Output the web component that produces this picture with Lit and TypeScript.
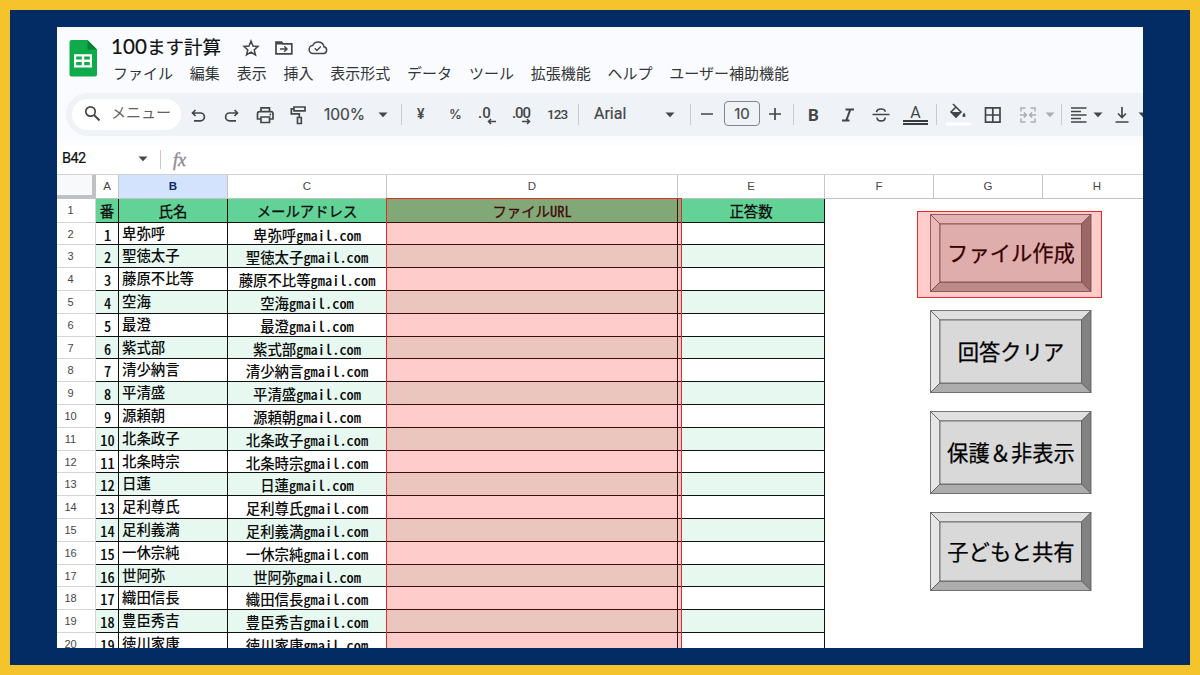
import { LitElement, html, css, svg } from "lit";
import { customElement } from "lit/decorators.js";

const names = ["卑弥呼", "聖徳太子", "藤原不比等", "空海", "最澄", "紫式部", "清少納言", "平清盛", "源頼朝", "北条政子", "北条時宗", "日蓮", "足利尊氏", "足利義満", "一休宗純", "世阿弥", "織田信長", "豊臣秀吉", "徳川家康"];
const menus = ["ファイル", "編集", "表示", "挿入", "表示形式", "データ", "ツール", "拡張機能", "ヘルプ", "ユーザー補助機能"];

const icon = (w: number, h: number, body: unknown, cls = "") =>
  html`<svg class="ic ${cls}" width=${w} height=${h} viewBox="0 0 ${w} ${h}">${body}</svg>`;
const caret = (cls = "") => icon(10, 6, svg`<path class="solid" d="M.5 .5h9L5 5.2z"/>`, cls);
const sep = html`<i class="sep"></i>`;

@customElement("bevel-button")
export class BevelButton extends LitElement {
  static properties = { h: { type: Number } };
  declare h: number;
  static styles = css`
    :host { display: grid; width: 162px; }
    svg, span { grid-area: 1 / 1; }
    svg { display: block; overflow: visible; }
    svg path { stroke: #555; stroke-width: 0.8; stroke-linejoin: round; }
    .face { fill: #d9d9d9; }
    .top { fill: #e0e0e0; }
    .left { fill: #e6e6e6; }
    .right { fill: #828282; }
    .bottom { fill: #adadad; }
    span { align-self: center; text-align: center; font: 400 21.3px/30px "Noto Sans CJK JP", sans-serif; color: #000; white-space: nowrap; -webkit-text-stroke: 0.25px #000; padding-bottom: 2px; }
  `;
  render() {
    const b = this.h - 0.5;
    return html`<svg width="162" height=${this.h}>
        <path class="top" d="M.5 .5H161L151.5 10H10z"/>
        <path class="left" d="M.5 .5L10 10V${b - 9.5}L.5 ${b}z"/>
        <path class="right" d="M161 .5V${b}L151.5 ${b - 9.5}V10z"/>
        <path class="bottom" d="M.5 ${b}L10 ${b - 9.5}H151.5L161 ${b}z"/>
        <path class="face" d="M10 10H151.5V${b - 9.5}H10z"/>
      </svg><span><slot></slot></span>`;
  }
}

@customElement("app-root")
export class AppRoot extends LitElement {
  static styles = css`
    :host { display: block; width: 1200px; height: 675px; box-sizing: border-box; border: 10px solid #f5c32c; background: #022c63; padding: 17px 47px; overflow: hidden; }
    * { box-sizing: border-box; }
    .win { width: 1086px; height: 621px; background: #fff; overflow: hidden; position: relative; font-family: "Noto Sans CJK JP", sans-serif; color: #444746; }
    .top { height: 118px; background: linear-gradient(#fafbfe 108px, #fdfdff 118px); }
    .head { height: 66px; display: flex; padding-left: 12px; }
    .logo { margin: 13px 15px 0 0; flex: none; }
    .titles { padding-top: 5px; }
    .title { display: flex; align-items: center; height: 28px; color: #111; font-size: 18.5px; white-space: nowrap; -webkit-text-stroke: 0.2px #111; }
    .title b { font: 400 20.5px/28px "Lato", sans-serif; width: 36px; letter-spacing: 0.1px; }
    .name { width: 130px; display: flex; align-items: center; margin-left: -1px; }
    .marks { display: flex; gap: 14px; align-items: center; padding: 3px 0 0 1px; }
    .menu { display: flex; gap: 16.8px; padding: 1px 0 0 1px; font-size: 15px; line-height: 24px; color: #333637; white-space: nowrap; }
    .bar { height: 43px; margin-left: 9px; padding-left: 6px; background: #eff3f8; border-radius: 22px 0 0 22px; display: grid; align-items: center; overflow: hidden; white-space: nowrap;
      grid-template-columns: 114px 34px 33px 33px 38px 54px 23px 15px 32px 30px 34px 35px 31px 16px 71px 25px 11px 23px 45px 24px 14px 35px 30px 31px 33px 10px 38px 35px 26px 16px 9px 23px 21px 24px 10px; }
    .ic { display: block; fill: none; stroke: #444746; stroke-width: 1.7; overflow: visible; }
    .solid { fill: #444746; stroke: none; }
    .dim { opacity: 0.4; }
    .sep { width: 1px; height: 21px; background: #c9cccf; }
    .search { width: 109px; height: 31px; border-radius: 16px; background: #fff; display: flex; align-items: center; padding-left: 12px; gap: 10px; color: #5f6364; }
    .search span { font-size: 15px; line-height: 22px; padding-bottom: 5px; }
    .t { font: 500 15px/20px "Roboto", sans-serif; color: #444746; }
    .yen { font-size: 14px; padding: 0 0 1px 1px; }
    .zoomv { font: 400 15.6px/20px "Inter", sans-serif; letter-spacing: -0.1px; -webkit-text-stroke: 0.2px #444746; }
    .pct { font-size: 15.5px; font-weight: 400; padding: 0 0 1px 1px; -webkit-text-stroke: 0.2px #444746; font-family: "Inter", sans-serif; font-size: 13px; }
    .small { font-size: 13.5px; letter-spacing: -0.9px; padding-bottom: 1px; }
    .font { font: 400 16px/20px "Roboto", sans-serif; padding-bottom: 2px; -webkit-text-stroke: 0.2px #444746; }
    .size { width: 36px; height: 25px; border: 1px solid #80868b; border-radius: 4px; text-align: center; font: 400 15px/23px "Inter", sans-serif; margin-top: -2px; -webkit-text-stroke: 0.2px #444746; }
    .bold { font: 700 17px/20px "Roboto", sans-serif; padding-left: 1px; }
    .fx { height: 29px; display: flex; align-items: center; padding-left: 4px; color: #111; }
    .ref { width: 77px; font: 400 14.5px/20px "Roboto", sans-serif; letter-spacing: -0.6px; padding: 0 0 1px 1px; -webkit-text-stroke: 0.2px #111; }
    .fx .ic { margin-top: -2px; }
    .vline { width: 1px; height: 19px; background: #c4c7c5; margin: 0 12px 0 12px; }
    .fn { font: italic 400 18px/20px "Liberation Serif", serif; color: #8a8d90; -webkit-text-stroke: 0.4px #8a8d90; }
    .cols, .row { display: grid; grid-template-columns: 39px 23px 109px 159px 291px 147px 109px 109px 100px; }
    .cols { height: 25px; border-top: 1px solid #d0d2d4; border-bottom: 1px solid #c0c2c4; font: 11.5px/23px "Liberation Sans", sans-serif; text-align: center; color: #444746; }
    .cols > * { border-right: 1px solid #c4c7c5; }
    .cols > :last-child { border-right: 0; padding-left: 8px; }
    .cols .corner { border-right: 4px solid #bfc1c3; border-bottom: 3px solid #bfc1c3; background: #f8f9fa; }
    .cols .sel { background: #d3e3fd; color: #0b2a66; font-weight: 700; }
    .row { height: 22.8px; font-size: 14.4px; line-height: 22px; color: #0c0c0c; font-feature-settings: "hwid"; font-weight: 500; white-space: nowrap; grid-template-columns: 39px 23px 109px 159px 291px 147px; }
    .row > * { border-right: 1.4px solid #111; border-bottom: 1.4px solid #111; overflow: hidden; text-align: center; }
    .row > .n { font: 11px/23px "Liberation Sans", sans-serif; color: #444746; border-color: #d2d4d6; padding-right: 11px; }
    .row:nth-child(odd) > .c { background: #e6f8ef; }
    .row:first-child { height: 23.7px; }
    .row:first-child > .c { background: #63d297; font-weight: 400; padding-top: 1px; -webkit-text-stroke: 0.3px #111; }
    .row > .name2 { text-align: left; padding-left: 3px; line-height: 20px; }
    .row > .num { line-height: 23px; padding-left: 1px; }
    .row > .mail { line-height: 23px; }
    .mark { position: absolute; border: 1.5px solid #e8292c; background: rgba(255, 0, 0, 0.2); }
    .mark.col { left: 329px; top: 171px; width: 296px; height: 451px; }
    .mark.btn { left: 860px; top: 184px; width: 185px; height: 87px; }
    .float { position: absolute; left: 873px; top: 187px; display: flex; flex-direction: column; gap: 18px; }
  `;

  render() {
    return html`<div class="win">
      <div class="top">
        <div class="head">
          <svg class="logo" width="28" height="37" viewBox="0 0 28 37"><path fill="#0fab4b" d="M2.500 0H18.500L28 9.500V34.500a2 2 0 0 1-2 2H2.500a2 2 0 0 1-2-2V2a2 2 0 0 1 2-2z"/><path fill="#0a8038" d="M18.500 0L28 9.500H18.500z"/><path fill="#fff" fill-rule="evenodd" d="M5 14.200H23V27.500H5zM7.200 16.400V19.600H12.800V16.400zM15.200 16.400V19.600H20.800V16.400zM7.200 22V25.300H12.800V22zM15.200 22V25.300H20.800V22z"/></svg>
          <div class="titles">
            <div class="title"><div class="name"><b>100</b>ます計算</div>
              <div class="marks">
                ${icon(18, 18, svg`<path stroke-width="1.500" d="M9 2L11 7.100L16 7.400L12.200 10.900L13.500 16L9 13.200L4.500 16L5.800 10.900L2 7.400L7 7.100z"/>`)}
                ${icon(20, 16, svg`<path d="M2 13.800V2H7.500L9 3.800H17.800V13.800z"/><path class="solid" d="M2 2H7.500L9 4.500H2z"/><path stroke-width="1.500" d="M6 9H12.500M10.200 6.200L13 9L10.200 11.800"/>`)}
                ${icon(20, 16, svg`<path stroke-width="1.500" d="M5.500 13.500H15.500A3.400 3.400 0 0 0 16 6.800A6 6 0 0 0 4.700 5.500A4 4 0 0 0 5.500 13.500z"/><path stroke-width="1.400" d="M6.800 8.200L9 10.400L12.800 6.500"/>`)}
              </div></div>
            <div class="menu">${menus.map((m) => html`<span>${m}</span>`)}</div>
          </div>
        </div>
        <div class="bar">
          <div class="search">${icon(17, 17, svg`<circle cx="6.500" cy="5.500" r="4.700"/><path stroke-width="2" d="M10 9L15.500 14.500"/>`)}<span>メニュー</span></div>
          ${icon(24, 24, svg`<path d="M9.500 7L6.500 10L9.500 13M6.800 10H14.500a3.900 3.900 0 0 1 0 7.800H8"/>`)}
          ${icon(24, 24, svg`<path d="M14.500 7L17.500 10L14.500 13M17.200 10H9.500a3.900 3.900 0 0 0 0 7.800H16"/>`)}
          ${icon(24, 24, svg`<path d="M8 8.500V4.800H16.500V8.500M7.500 16H4.500V11a2.300 2.300 0 0 1 2.300-2.300H17.700A2.300 2.300 0 0 1 20 11V16H17M8 14H16.500V19.500H8z"/><circle class="solid" cx="17.300" cy="11.500" r=".9"/>`)}
          ${icon(24, 24, svg`<path d="M8 4H19V7.800H8zM8 5.800H5.300V10.800H13.300V14M11.500 14.500H15.300V20.500H11.500z"/>`)}
          <span class="t zoomv">100%</span>${caret()}${sep}
          <span class="t yen">¥</span><span class="t pct">%</span>
          ${icon(22, 24, svg`<text class="solid" x="0" y="15" font-family="Roboto" font-weight="500" font-size="15">.0</text><path stroke-width="1.600" d="M18 18.500H10.500M13 16L10.500 18.500L13 21"/>`)}
          ${icon(22, 24, svg`<text class="solid" x="0" y="15" font-family="Roboto" font-weight="500" font-size="15" textLength="19">.00</text><path stroke-width="1.600" d="M10 18.500H17.500M15 16L17.500 18.500L15 21"/>`)}
          <span class="t small">123</span>${sep}
          <span class="t font">Arial</span>${caret()}${sep}
          ${icon(12, 12, svg`<path d="M0 5H12"/>`)}
          <span class="t size">10</span>
          ${icon(12, 12, svg`<path d="M0 5H12M6 -1V11"/>`)}${sep}
          <span class="t bold">B</span>
          ${icon(12, 14, svg`<path stroke-width="2.100" d="M3.500 1.500H12M0 12.500H7.500M8.300 1.500L4.300 12.500"/>`)}
          ${icon(18, 14, svg`<path d="M0.500 6.500H17.500M4.500 4.200C5 0 13 0 13.300 3.800M5 9.500C5.200 14 13 14.200 13.200 9.500"/>`)}
          ${icon(25, 22, svg`<text class="solid" x="12.500" y="14" text-anchor="middle" font-family="Roboto" font-size="16">A</text><path stroke="#000" stroke-width="1.300" d="M0 17H25M0 20H25"/>`)}${sep}
          ${icon(24, 24, svg`<path stroke="#fff" stroke-width="3" d="M0 21H25"/><path stroke-width="1.600" d="M7 1L15 9L10 14L5 9L10 4"/><path class="solid" d="M5 9H15L10 14.500z"/><path class="solid" d="M18 9.500q3.200 4.500 0 4.500q-3.200 0 0-4.500"/>`)}
          ${icon(18, 18, svg`<path d="M1.500 1.800H16V16.200H1.500zM8.800 2V16M2 9H16"/>`)}
          ${icon(18, 18, svg`<path stroke-width="1.500" d="M6.500 2H2V5.500M2 12.500V16H6.500M11.500 2H16V5.500M16 12.500V16H11.500M1 9H7M5 6.500L7.300 9L5 11.500M17 9H11M13 6.500L10.700 9L13 11.500"/>`, "dim")}
          ${caret("dim")}${sep}
          ${icon(18, 18, svg`<path d="M1 2H16.500M1 5.500H11M1 9H16.500M1 12.500H11M1 16H16.500"/>`)}${caret()}
          ${icon(16, 18, svg`<path d="M8 1V11M4 7.500L8 11.500L12 7.500M1.500 16H14.500"/>`)}${caret()}
        </div>
      </div>
      <div class="fx"><span class="ref">B42</span>${caret()}<i class="vline"></i><span class="fn">fx</span></div>
      <div class="cols"><span class="corner"></span><span>A</span><span class="sel">B</span><span>C</span><span>D</span><span>E</span><span>F</span><span>G</span><span>H</span></div>
      <div class="sheet">
        <div class="row"><span class="n">1</span><span class="c">番</span><span class="c">氏名</span><span class="c">メールアドレス</span><span class="c">ファイルURL</span><span class="c">正答数</span></div>
        ${names.map((n, i) => html`<div class="row"><span class="n">${i + 2}</span><span class="c num">${i + 1}</span><span class="c name2">${n}</span><span class="c mail">${n}gmail.com</span><span class="c"></span><span class="c"></span></div>`)}
      </div>
      <div class="float">
        <bevel-button .h=${78}>ファイル作成</bevel-button>
        <bevel-button .h=${83}>回答クリア</bevel-button>
        <bevel-button .h=${83}>保護＆非表示</bevel-button>
        <bevel-button .h=${79}>子どもと共有</bevel-button>
      </div>
      <div class="mark col"></div>
      <div class="mark btn"></div>
    </div>`;
  }
}
